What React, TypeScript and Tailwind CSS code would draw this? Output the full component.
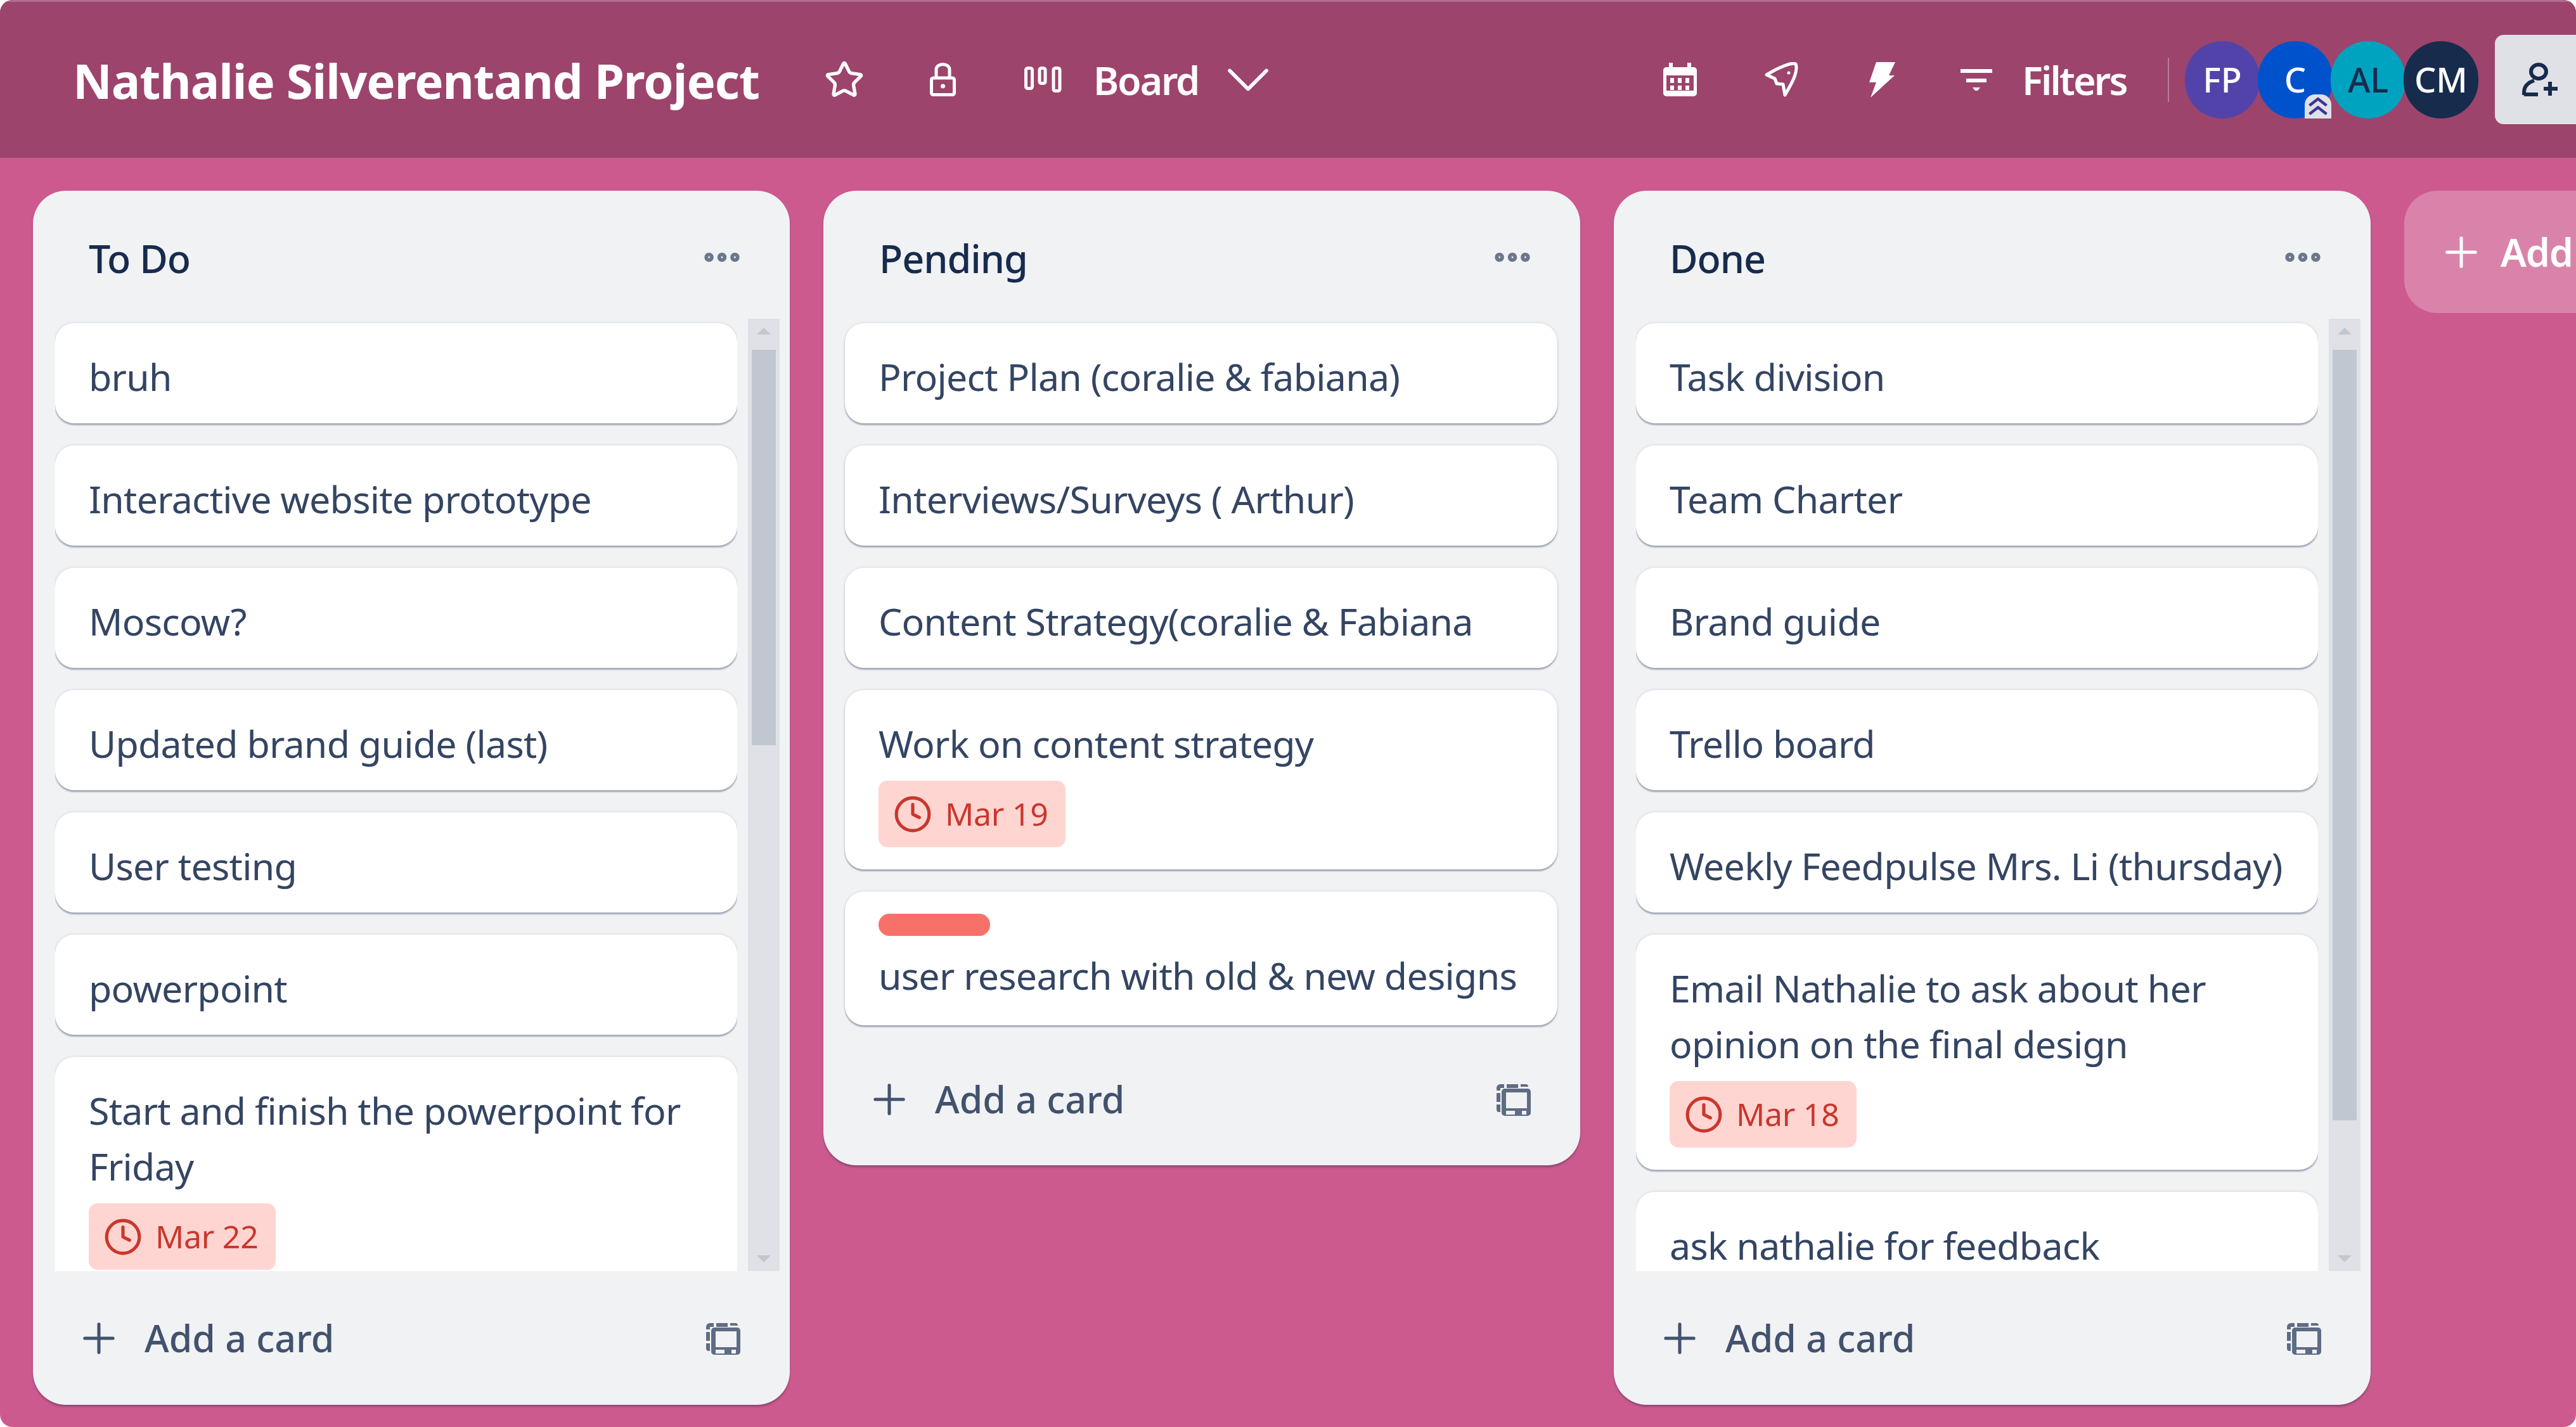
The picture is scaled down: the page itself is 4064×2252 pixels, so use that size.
import React from 'react';
import { Star, ChevronDown, Clock, Plus, Ellipsis } from 'lucide-react';

/* ------------------------------------------------------------------
 * drawn icons (trello's own glyphs, not in the icon packages)
 * ---------------------------------------------------------------- */
const LockIcon = () => (
  <svg viewBox="0 0 41 53" className="h-[53px] w-[41px]" fill="none" stroke="white" strokeWidth="5">
    <rect x="2.5" y="24" width="36" height="26.5" rx="3" />
    <path d="M10 24V10.5a10.5 8 0 0 1 21 0V24" />
    <circle cx="20.5" cy="37" r="3.5" fill="white" stroke="none" />
  </svg>
);

const BoardIcon = () => (
  <svg viewBox="0 0 59 41" className="h-[41px] w-[59px]" fill="none" stroke="white" strokeWidth="5">
    <rect x="2.5" y="2.5" width="10" height="32" rx="3" />
    <rect x="24" y="2.5" width="9" height="24" rx="3" />
    <rect x="46" y="2.5" width="10" height="36" rx="3" />
  </svg>
);

const CalendarIcon = () => (
  <svg viewBox="0 0 53 53" className="h-[53px] w-[53px]" fill="white">
    <path
      fillRule="evenodd"
      d="M9 0h6v7h23V0h6v7h4a5 5 0 0 1 5 5v36a5 5 0 0 1-5 5H5a5 5 0 0 1-5-5V12a5 5 0 0 1 5-5h4zM5 20v24h43V20z"
    />
    <path d="M11 24h6v8h-6zM23 24h6v8h-6zM35 24h6v8h-6zM11 36h6v7h-6zM23 36h6v7h-6zM35 36h6v7h-6z" />
  </svg>
);

const RocketIcon = () => (
  <svg viewBox="0 0 55 55" className="h-[55px] w-[55px]" fill="none" stroke="white" strokeWidth="5" strokeLinejoin="round">
    <path d="M50 3c3 8-1 20-8 33l-9 16-3-17-10-1-3-8-13-6 14-8C29 7 43 0 50 3z" />
    <circle cx="39" cy="17" r="1.5" fill="white" strokeWidth="2" />
  </svg>
);

const BoltIcon = () => (
  <svg viewBox="0 0 41 56" className="h-[56px] w-[41px]" fill="white">
    <path d="M11 0h30l-10 21h9L2 56l9-24H0z" />
  </svg>
);

const FilterIcon = () => (
  <svg viewBox="0 0 50 34" className="h-[34px] w-[50px]" fill="white">
    <path d="M0 0h50v6H0zM9 15h32v6H9zM19 29h12l-4 5h-4z" />
  </svg>
);

const AddUserIcon = () => (
  <svg viewBox="0 0 56 54" className="h-[54px] w-[56px] shrink-0" fill="none" stroke="#172b4d" strokeWidth="6">
    <ellipse cx="26" cy="14" rx="12" ry="11" />
    <path d="M3 51v-4c0-10 7-16 16-19M3 50h22" />
    <path d="M44 30v22M34 41h22" strokeWidth="6" />
  </svg>
);

const TemplateIcon = () => (
  <svg viewBox="0 0 54 52" className="h-[52px] w-[54px] shrink-0" fill="#5e6c84">
    <path d="M0 8a6 6 0 0 1 6-6h6v6H6v4H0zM16 2h18v6H16zM38 2h8a4 4 0 0 1 4 4H38zM0 16h6v14H0zM0 34h6v12H4a4 4 0 0 1-4-4z" />
    <path
      fillRule="evenodd"
      d="M13 9h36a5 5 0 0 1 5 5v33a5 5 0 0 1-5 5H13a5 5 0 0 1-5-5V14a5 5 0 0 1 5-5zm2 6v25h33V15zm0 29v6h14v-6zm25 0v6h7v-6z"
    />
  </svg>
);

const ArrowUp = () => (
  <div className="h-0 w-0 border-x-[11px] border-b-[11px] border-x-transparent border-b-[#c1c7d0]" />
);

const ArrowDown = () => (
  <div className="h-0 w-0 border-x-[11px] border-t-[11px] border-x-transparent border-t-[#c1c7d0]" />
);

/* ------------------------------------------------------------------
 * data
 * ---------------------------------------------------------------- */
interface Task {
  title: string;
  due?: string;
  label?: boolean;
}

const todo: Task[] = [
  { title: 'bruh' },
  { title: 'Interactive website prototype' },
  { title: 'Moscow?' },
  { title: 'Updated brand guide (last)' },
  { title: 'User testing' },
  { title: 'powerpoint' },
  { title: 'Start and finish the powerpoint for Friday', due: 'Mar 22' },
];

const pending: Task[] = [
  { title: 'Project Plan (coralie & fabiana)' },
  { title: 'Interviews/Surveys ( Arthur)' },
  { title: 'Content Strategy(coralie & Fabiana' },
  { title: 'Work on content strategy', due: 'Mar 19' },
  { title: 'user research with old & new designs', label: true },
];

const done: Task[] = [
  { title: 'Task division' },
  { title: 'Team Charter' },
  { title: 'Brand guide' },
  { title: 'Trello board' },
  { title: 'Weekly Feedpulse Mrs. Li (thursday)' },
  { title: 'Email Nathalie to ask about her opinion on the final design', due: 'Mar 18' },
  { title: 'ask nathalie for feedback' },
];

const avatars = [
  { text: 'FP', color: 'bg-[#5243aa] text-white' },
  { text: 'C', color: 'bg-[#0052cc] text-white' },
  { text: 'AL', color: 'bg-[#00a3bf] text-[#172b4d]' },
  { text: 'CM', color: 'bg-[#172b4d] text-white' },
];

/* ------------------------------------------------------------------
 * pieces
 * ---------------------------------------------------------------- */
const TaskCard: React.FC<{ task: Task }> = ({ task }) => {
  // cards with a label or a due date have a different rhythm from plain ones
  const padding = task.label ? 'pt-[35px] pb-[35px]' : task.due ? 'pt-[40px] pb-[35px]' : 'pt-[40px] pb-[30px]';

  return (
    <div
      className={`mb-[35px] shrink-0 rounded-[30px] bg-white pr-[30px] pl-[53px] text-[#344563] shadow-[0_3px_2px_rgba(9,30,66,0.3),0_0_4px_rgba(9,30,66,0.15)] ${padding}`}
    >
      {task.label && <div className="mb-[18px] h-[35px] w-[176px] rounded-[17px] bg-[#f87168]" />}
      <div className="text-[59px] leading-[88px] tracking-[-0.7px]">{task.title}</div>
      {task.due && (
        <div className="mt-[15px] flex h-[105px] w-[295px] items-center gap-[20px] rounded-[14px] bg-[#ffd5d2] pl-[23px] text-[50px] tracking-[-0.3px] text-[#c9372c]">
          <Clock className="h-[62px] w-[62px] shrink-0" strokeWidth={2} />
          {task.due}
        </div>
      )}
    </div>
  );
};

const ListFooter: React.FC<{ size: string }> = ({ size }) => (
  <div className={`flex shrink-0 items-center justify-between pr-[78px] pl-[72px] ${size}`}>
    <div className="flex items-center gap-[34px] text-[59px] font-medium tracking-[0px] text-[#42526e]">
      <Plus className="-ml-[6px] h-[76px] w-[76px]" strokeWidth={1.6} />
      Add a card
    </div>
    <TemplateIcon />
  </div>
);

const ListHeader: React.FC<{ title: string }> = ({ title }) => (
  <div className="flex h-[202px] shrink-0 items-center justify-between pt-[12px] pr-[72px] pl-[88px]">
    <span className="text-[61px] font-medium tracking-[-1px] text-[#172b4d]">{title}</span>
    <Ellipsis className="-mt-[4px] h-[70px] w-[70px] text-[#6b778c]" strokeWidth={3} />
  </div>
);

const ScrollList: React.FC<{ title: string; tasks: Task[]; thumb: string }> = ({ title, tasks, thumb }) => (
  <section className="flex h-[1916px] w-[1194px] shrink-0 flex-col rounded-[52px] bg-[#f1f2f4] shadow-[0_3px_3px_rgba(9,30,66,0.3)]">
    <ListHeader title={title} />
    <div className="flex h-[1503px] shrink-0 overflow-hidden">
      <div className="ml-[35px] flex w-[1076px] shrink-0 flex-col overflow-hidden pt-[7px]">
        {tasks.map((t) => (
          <TaskCard key={t.title} task={t} />
        ))}
      </div>
      {/* old style scrollbar */}
      <div className="ml-[17px] flex h-full w-[50px] flex-col items-center justify-between bg-[#dfe1e6] pt-[14px] pb-[14px]">
        <ArrowUp />
        <div className={`mt-[24px] w-[38px] bg-[#c1c7d0] ${thumb}`} />
        <div className="flex-1" />
        <ArrowDown />
      </div>
    </div>
    <ListFooter size="h-[211px]" />
  </section>
);

export default function App() {
  return (
    <div className="h-[2252px] w-[4064px] overflow-hidden bg-white font-['Noto_Sans','Open_Sans',sans-serif]">
      <div className="flex h-full flex-col overflow-hidden rounded-[20px] bg-[#cc5a8e]">
        {/* top bar */}
        <header className="flex h-[249px] shrink-0 items-center overflow-hidden border-t-[3px] border-b-[1px] border-t-[#b56d92] border-b-[#8f4066] bg-[#9c446c] pl-[115px] text-white">
          <div className="flex w-[2509px] shrink-0 items-center">
            <h1 className="mt-[3px] w-[1185px] shrink-0 text-[76px] leading-none font-bold tracking-[-1px]">
              Nathalie Silverentand Project
            </h1>
            <Star className="h-[64px] w-[64px] shrink-0" strokeWidth={2} />
            <div className="ml-[103px] shrink-0">
              <LockIcon />
            </div>
            <div className="ml-[108px] flex items-center">
              <BoardIcon />
            </div>
            <span className="mt-[3px] ml-[50px] text-[61px] font-semibold tracking-[-2.2px]">Board</span>
            <ChevronDown className="ml-[20px] h-[116px] w-[116px] shrink-0" strokeWidth={1.2} />
          </div>

          <div className="flex shrink-0 items-center">
            <CalendarIcon />
            <div className="ml-[106px]">
              <RocketIcon />
            </div>
            <div className="ml-[111px]">
              <BoltIcon />
            </div>
            <div className="ml-[103px]">
              <FilterIcon />
            </div>
            <span className="mt-[3px] ml-[47px] w-[172px] text-[61px] font-semibold tracking-[-2.8px]">Filters</span>
            <div className="ml-[58px] h-[70px] w-[2px] bg-white/30" />
            <div className="ml-[25px] flex items-center">
              {avatars.map((a) => (
                <div
                  key={a.text}
                  className={`relative -mr-[3px] flex h-[122px] w-[118px] items-center justify-center rounded-full text-[54px] font-medium ${a.color}`}
                >
                  {a.text}
                  {a.text === 'C' && (
                    <div className="absolute right-[2px] bottom-0 flex h-[38px] w-[42px] items-center justify-center rounded-t-[16px] bg-[#dfe1e6] text-[#403294]">
                      <svg viewBox="0 0 24 22" className="h-[34px] w-[36px]" fill="none" stroke="currentColor" strokeWidth="3">
                        <path d="M3 10l9-7 9 7M3 19l9-7 9 7" />
                      </svg>
                    </div>
                  )}
                </div>
              ))}
            </div>
            <div className="ml-[29px] flex h-[141px] w-[240px] shrink-0 items-center gap-[26px] rounded-[14px] bg-[#dfe1e6] pl-[43px] text-[61px] text-[#172b4d]">
              <AddUserIcon />
              Share
            </div>
          </div>
        </header>

        {/* board */}
        <main className="flex items-start gap-[53px] pt-[52px] pl-[52px]">
          <ScrollList title="To Do" tasks={todo} thumb="h-[624px]" />

          <section className="flex w-[1194px] shrink-0 flex-col rounded-[52px] bg-[#f1f2f4] shadow-[0_3px_3px_rgba(9,30,66,0.3)]">
            <ListHeader title="Pending" />
            <div className="ml-[34px] flex w-[1124px] flex-col pt-[7px]">
              {pending.map((t) => (
                <TaskCard key={t.title} task={t} />
              ))}
            </div>
            <ListFooter size="h-[186px] pb-[23px]" />
          </section>

          <ScrollList title="Done" tasks={done} thumb="h-[1216px]" />

          <div className="flex h-[193px] w-[600px] shrink-0 items-center gap-[24px] rounded-[52px] bg-white/25 pl-[52px] text-[61px] font-semibold tracking-[-1.2px] whitespace-nowrap text-white">
            <Plus className="h-[76px] w-[76px] shrink-0" strokeWidth={1.6} />
            Add another list
          </div>
        </main>
      </div>
    </div>
  );
}
